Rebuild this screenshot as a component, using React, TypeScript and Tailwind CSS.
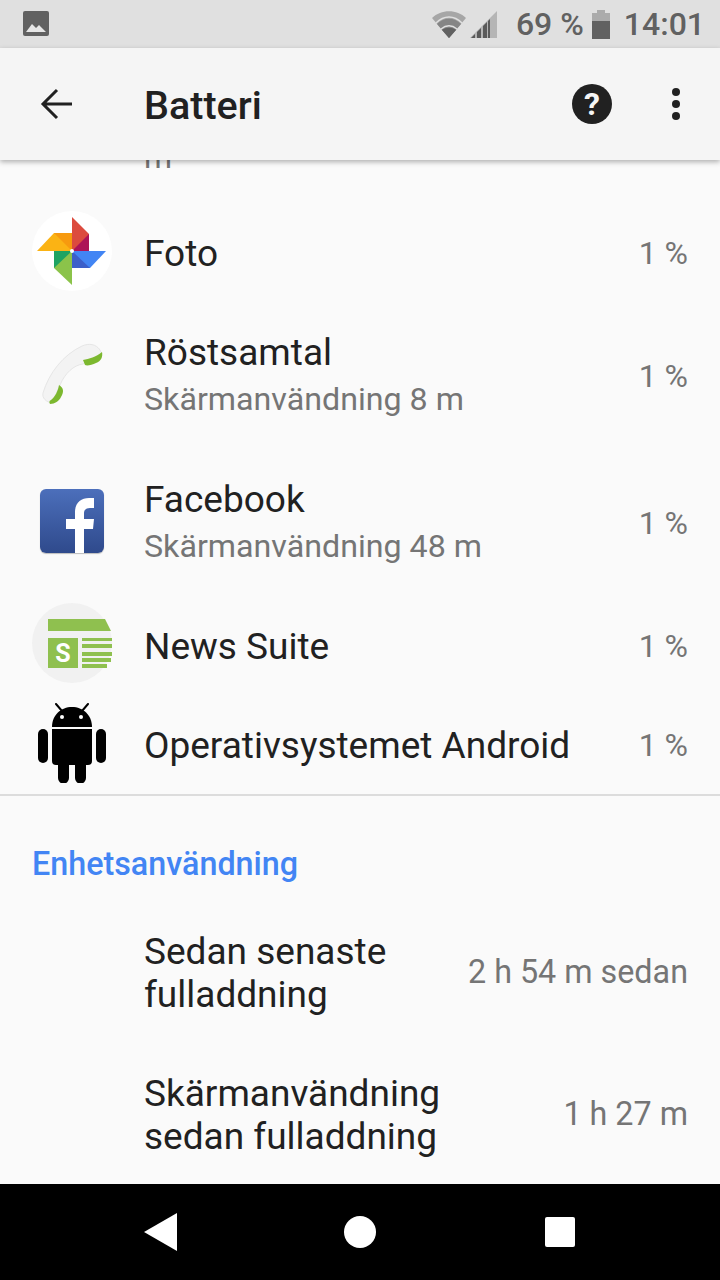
import { ReactNode } from 'react';

function FotoIcon() {
  return (
    <svg width="80" height="80" viewBox="0 0 80 80" className="-mt-[4px]">
      <circle cx="40" cy="40" r="40" fill="#ffffff" />
      <path d="M40 40V6l17 17v17z" fill="#dc4b3e" />
      <path d="M40 40l17-17v17z" fill="#ad1457" />
      <path d="M40 40h34L58 57H40z" fill="#4285f4" />
      <path d="M40 40l18 17H40z" fill="#3b5fc9" />
      <path d="M40 40v34L22 57V40z" fill="#8bc34a" />
      <path d="M40 40L22 57V40z" fill="#1ea362" />
      <path d="M40 40H5l17-18h18z" fill="#fbb314" />
      <path d="M40 40L22 22h18z" fill="#f79a0e" />
      <circle cx="40" cy="40" r="2" fill="#ffffff" />
    </svg>
  );
}

function PhoneIcon() {
  return (
    <svg width="80" height="80" viewBox="0 0 80 80" className="-mt-[2px]">
      <path d="M11 58C17 38 31 20 50 11C57 8 64 9 68 15L70 19L51 29C42 30 33 38 28 50L20 68C14 67 10 63 11 58z" fill="#f3f3f3" stroke="#e6e6e6" strokeWidth="1" />
      <path d="M51 25C57 24 64 22 70 17C71 22 69 26 64 28C60 30 55 31 53 30z" fill="#7cb82f" />
      <path d="M27 50C32 53 32 57 29 62C27 66 23 69 18 69C17 67 17 66 19 65C23 62 26 56 27 50z" fill="#7cb82f" />
    </svg>
  );
}

function FacebookIcon() {
  return (
    <div className="-mt-[3px] w-[64px] h-[64px] rounded-[6px] bg-gradient-to-b from-[#4c6fbb] to-[#2f4a8c] overflow-hidden shadow-[0_1px_1px_rgba(0,0,0,0.25)]">
      <svg width="64" height="64" viewBox="0 0 64 64">
        <path d="M35 64V40h-9V30h9v-7C35 14 41 9 49 9h5v10h-4c-4 0-6 2-6 5v6h10l-1 10h-9v24z" fill="#ffffff" />
      </svg>
    </div>
  );
}

function NewsIcon() {
  return (
    <svg width="80" height="80" viewBox="0 0 80 80" className="-mt-[6px]">
      <circle cx="40" cy="40" r="40" fill="#f1f1f1" />
      <path d="M16 16h57l6 12H16z" fill="#8fc04f" />
      <rect x="16" y="35" width="30" height="30" fill="#8fc04f" />
      <path d="M50 35h30v3H50zM50 41h30v4H50zM50 49h30v4H50zM50 55h29v4H50zM50 61h25v4H50z" fill="#8fc04f" />
      <text x="31" y="59" textAnchor="middle" fontFamily="Roboto, sans-serif" fontWeight="700" fontSize="25" fill="#ffffff">S</text>
    </svg>
  );
}

function AndroidIcon() {
  return (
    <svg width="80" height="80" viewBox="0 0 80 80" fill="#000000" className="-mt-[4px]">
      <path d="M20 24C20 12 29 4 40 4s20 8 20 20z" />
      <path d="M24 1l6 7M56 1l-6 7" stroke="#000000" strokeWidth="2" strokeLinecap="round" />
      <circle cx="30" cy="14" r="2" fill="#ffffff" />
      <circle cx="49" cy="14" r="2" fill="#ffffff" />
      <path d="M20 26h40v32a4 4 0 0 1-4 4h-2v13a5.500 5.500 0 0 1-11 0V62h-6v13a5.500 5.500 0 0 1-11 0V62h-2a4 4 0 0 1-4-4z" />
      <rect x="6" y="26" width="10" height="34" rx="5" />
      <rect x="64" y="26" width="10" height="34" rx="5" />
    </svg>
  );
}

function AppRow({ icon, title, sub, h }: { icon: ReactNode; title: string; sub?: string; h: string }) {
  return (
    <div className={`${h} flex items-center pl-[32px] pr-[32px]`}>
      <div className="w-[80px] h-[80px] flex items-center justify-center shrink-0">{icon}</div>
      <div className="ml-[32px] flex-1">
        <div className="text-[37px] leading-[47px] text-[#212121]">{title}</div>
        {sub && <div className="text-[32.200px] leading-[47px] text-[#757575]">{sub}</div>}
      </div>
      <div className="text-[32px] text-[#757575]">1 %</div>
    </div>
  );
}

function UsageRow({ lines, value, h }: { lines: string[]; value: string; h: string }) {
  return (
    <div className={`${h} shrink-0 flex items-center pl-[144px] pr-[32px]`}>
      <div className="flex-1 mt-[2px] text-[37px] leading-[43px] text-[#212121]">
        {lines.map(l => (
          <div key={l}>{l}</div>
        ))}
      </div>
      <div className="text-[32.300px] text-[#757575]">{value}</div>
    </div>
  );
}

export default function App() {
  return (
    <div className="w-[720px] h-[1280px] flex flex-col bg-[#fafafa] overflow-hidden font-['Roboto',sans-serif]">
      {/* Status bar */}
      <div className="h-[48px] shrink-0 bg-[#e0e0e0] flex items-center pl-[23px] pr-[15px] text-[#616161]">
        <svg width="26" height="26" viewBox="0 0 26 26">
          <rect x="0" y="0" width="26" height="25" rx="2" fill="#616161" />
          <path d="M3 21l6-8 4 4 3-3 7 7z" fill="#e6e6e6" />
        </svg>
        <div className="flex-1" />
        <svg width="34" height="28" viewBox="0 0 34 28" className="mr-[4px]">
          <path d="M0 8C9-1 25-1 34 8L17 28z" fill="#a6a6a6" />
          <path d="M5 14C12 7 22 7 29 14L17 28z" fill="#858585" />
          <path d="M10 20c4-3 10-3 14 0L17 28z" fill="#616161" />
          <path d="M4 13C12 5 22 5 30 13M9 19c5-4 11-4 16 0" fill="none" stroke="#e0e0e0" strokeWidth="1.500" />
        </svg>
        <svg width="27" height="27" viewBox="0 0 27 27">
          <path d="M0 27L27 0v27z" fill="#b5b5b5" />
          <path d="M1 27l4-4v4zM7 27v-6l4-4v10zM13 27V15l4-4v16zM18 27V10l2-2v19z" fill="#5a5a5a" />
        </svg>
        <span className="ml-[19px] text-[32px] font-medium leading-none">69 %</span>
        <svg width="18" height="29" viewBox="0 0 18 29" className="ml-[8px]">
          <path d="M5 0h8v3h5v8H0V3h5z" fill="#ababab" />
          <rect x="0" y="11" width="18" height="18" fill="#616161" />
        </svg>
        <span className="ml-[14px] text-[32px] font-medium leading-none">14:01</span>
      </div>

      {/* App bar */}
      <div className="relative z-10 h-[112px] shrink-0 bg-[#f5f5f5] shadow-[0_2px_5px_rgba(0,0,0,0.3)] flex items-center">
        <svg width="32" height="32" viewBox="0 0 32 32" className="ml-[40px]" fill="none" stroke="#212121" strokeWidth="3">
          <path d="M33 16H3M17 2L3 16l14 14" />
        </svg>
        <div className="ml-[72px] mt-[4px] flex-1 text-[39.500px] font-medium text-[#212121]">Batteri</div>
        <div className="w-[40px] h-[40px] rounded-full bg-[#212121] flex items-center justify-center text-[#f5f5f5] text-[32px] font-bold">?</div>
        <div className="ml-[60px] mr-[40px] flex flex-col gap-[4px]">
          <div className="w-[8px] h-[8px] rounded-full bg-[#212121]" />
          <div className="w-[8px] h-[8px] rounded-full bg-[#212121]" />
          <div className="w-[8px] h-[8px] rounded-full bg-[#212121]" />
        </div>
      </div>

      {/* Scrolled list */}
      <div className="flex-1 overflow-hidden">
        <div className="h-[45px] overflow-hidden pl-[144px]">
          <div className="text-[32px] leading-[46px] text-[#757575] -mt-[26px]">m</div>
        </div>
        <AppRow h="h-[96px]" icon={<FotoIcon />} title="Foto" />
        <AppRow h="h-[148px] pt-[2px]" icon={<PhoneIcon />} title="Röstsamtal" sub="Skärmanvändning 8 m" />
        <AppRow h="h-[147px]" icon={<FacebookIcon />} title="Facebook" sub="Skärmanvändning 48 m" />
        <AppRow h="h-[100px]" icon={<NewsIcon />} title="News Suite" />
        <AppRow h="h-[98px]" icon={<AndroidIcon />} title="Operativsystemet Android" />
        <div className="h-[2px] bg-[#dcdcdc]" />
        <div className="h-[112px] pt-[24px] pl-[32px] flex items-center text-[32.300px] font-medium text-[#4285f4]">Enhetsanvändning</div>
        <UsageRow h="h-[128px]" lines={['Sedan senaste', 'fulladdning']} value="2 h 54 m sedan" />
        <UsageRow h="h-[156px]" lines={['Skärmanvändning', 'sedan fulladdning']} value="1 h 27 m" />
      </div>

      {/* Navigation bar */}
      <div className="h-[96px] shrink-0 bg-black flex items-center">
        <svg width="34" height="38" viewBox="0 0 34 38" className="ml-[144px]">
          <path d="M33 0v38L0 19z" fill="#ffffff" />
        </svg>
        <div className="ml-[166px] w-[32px] h-[32px] rounded-full bg-white" />
        <div className="ml-[169px] w-[30px] h-[30px] rounded-[2px] bg-white" />
      </div>
    </div>
  );
}
